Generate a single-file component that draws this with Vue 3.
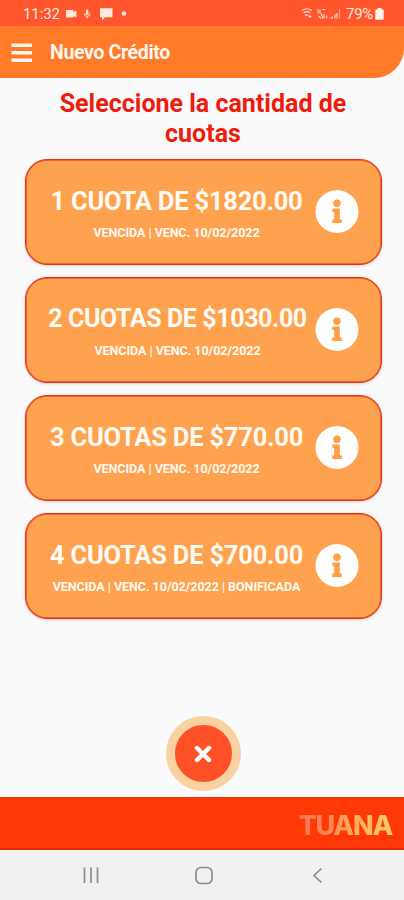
<script setup>
const plans = [
  { title: '1 CUOTA DE $1820.00', note: 'VENCIDA | VENC. 10/02/2022' },
  { title: '2 CUOTAS DE $1030.00', note: 'VENCIDA | VENC. 10/02/2022', wide: true },
  { title: '3 CUOTAS DE $770.00', note: 'VENCIDA | VENC. 10/02/2022' },
  { title: '4 CUOTAS DE $700.00', note: 'VENCIDA | VENC. 10/02/2022 | BONIFICADA' },
]
</script>

<template>
  <div class="screen">
    <div class="status">
      <span class="clock">11:32</span>
      <svg class="status-left" width="64" height="14" viewBox="0 0 64 14" fill="#ffe9df">
        <path d="M1 3h7.500v2l3-1.500v7l-3-1.500v1.500H1z" />
        <rect x="20.800" y="2.500" width="2.600" height="5.500" rx="1.300" />
        <path d="M19.300 6.500q.3 3 2.800 3t2.800-3M22.100 9v2.500" fill="none" stroke="#ffe9df" stroke-width="1" />
        <path d="M35 1.300h12.500v9H40l-3 3v-3h-2z" />
        <circle cx="59" cy="6.500" r="2.300" />
      </svg>
      <span class="fill"></span>
      <svg class="status-right" width="42" height="14" viewBox="0 0 42 14" fill="none" stroke="#ffd9cb" stroke-width="1.200">
        <path d="M.8 3.500q5-3.500 10 0M2.500 6q3.300-2.600 6.600 0M4.200 8.500q1.600-1.300 3.200 0" />
        <path d="M7.500 9.500h3M9 8v3" />
        <path d="M17 2.500v4M19 2.500v4M21.500 2.500h3M17.500 9l2.500 2.500M20 6.500l2 5M23 7v4.500M25.500 8.500v3" />
        <path d="M29 11.500h3V9z" fill="#ffd9cb" stroke="none" />
        <path d="M34 11.500V7.500M36 11.500V6" />
        <path d="M38.500 11.500V2" opacity=".5" />
      </svg>
      <span class="battery-text">79%</span>
      <svg class="battery" width="9" height="12" viewBox="0 0 9 12" fill="#fff4ee">
        <path d="M2.500 0h4v1.500H8a.7.7 0 0 1 .7.7v8.800a.7.7 0 0 1-.7.7H1a.7.7 0 0 1-.7-.7V2.200a.7.7 0 0 1 .7-.7h1.500z" />
      </svg>
    </div>
    <header class="header">
      <svg width="22" height="20" viewBox="0 0 22 20" fill="#fff6ec">
        <rect x=".5" y="0.500" width="20.500" height="3.500" rx=".8" />
        <rect x=".5" y="8" width="20.500" height="3.500" rx=".8" />
        <rect x=".5" y="15.500" width="20.500" height="3.500" rx=".8" />
      </svg>
      <span class="header-title">Nuevo Crédito</span>
    </header>

    <main class="content">
      <h1 class="heading"><span>Seleccione la cantidad de</span> <span>cuotas</span></h1>
      <div class="cards">
        <section v-for="plan in plans" :key="plan.title" class="card">
          <div class="card-text" :class="{ wide: plan.wide }">
            <div class="card-title">{{ plan.title }}</div>
            <div class="card-note">{{ plan.note }}</div>
          </div>
          <svg class="info" width="44" height="44" viewBox="0 0 44 44">
            <circle cx="22" cy="21.500" r="21.500" fill="#fff" />
            <g fill="#ff9f45">
              <circle cx="22" cy="13.300" r="3.700" />
              <path d="M17.300 18.500h7.500v11h2v3.500h-9.600v-3.500h2V22h-1.900z" />
            </g>
          </svg>
        </section>
      </div>
      <button class="close" aria-label="Cerrar">
        <svg width="18" height="18" viewBox="0 0 18 18" fill="none" stroke="#fff" stroke-width="4.400" stroke-linecap="round">
          <path d="M3 3l12 12M15 3L3 15" />
        </svg>
      </button>
    </main>

    <footer class="brand"><span class="logo">TUANA</span></footer>
    <nav class="nav">
      <svg width="404" height="50" viewBox="0 0 404 50" fill="none" stroke="#8c8c8c" stroke-width="1.700">
        <path d="M84.500 17.500v15.500M91 17.500v15.500M97.500 17.500v15.500" />
        <rect x="196" y="17.500" width="16" height="16" rx="5" />
        <path d="M321.500 18.500l-7.500 7 7.500 7" />
      </svg>
    </nav>
  </div>
</template>

<style>
body {
  margin: 0;
  background: #fafafa;
}
</style>

<style scoped>
.screen {
  width: 404px;
  height: 900px;
  display: flex;
  flex-direction: column;
  overflow: hidden;
  background: #fafafa;
  font-family: Roboto, "Liberation Sans", sans-serif;
}
.status {
  height: 26px;
  flex: none;
  box-sizing: border-box;
  padding: 1px 20px 0 23px;
  display: flex;
  align-items: center;
  background: #ff562d;
  color: #ffe9df;
}
.clock {
  width: 42px;
  font-size: 15px;
  letter-spacing: -0.1px;
}
.fill {
  flex: 1;
}
.status-right {
  margin-right: 3px;
}
.battery-text {
  width: 28px;
  font-size: 15px;
  letter-spacing: -0.3px;
  white-space: nowrap;
}
.battery {
  margin-left: 1px;
}
.header {
  height: 52px;
  flex: none;
  box-sizing: border-box;
  padding: 1px 0 0 11px;
  display: flex;
  align-items: center;
  gap: 17px;
  background: #ff7a29;
  border-bottom-right-radius: 30px;
  color: #fff6ec;
}
.header-title {
  font-size: 19.500px;
  font-weight: 700;
  letter-spacing: -0.35px;
}
.content {
  flex: 1;
  display: flex;
  flex-direction: column;
  align-items: center;
  background: #fafafa;
}
.heading {
  margin: 11px 0 0;
  padding-left: 2px;
  box-sizing: border-box;
  width: 404px;
  display: flex;
  flex-direction: column;
  align-items: center;
  font-size: 25px;
  line-height: 30px;
  font-weight: 700;
  color: #ee1c0c;
}
.cards {
  width: 357px;
  margin: 10px 0 0 2px;
  display: flex;
  flex-direction: column;
  gap: 12px;
}
.card {
  height: 106px;
  box-sizing: border-box;
  border: 1px solid #e93012;
  border-radius: 22px;
  padding-left: 20px;
  display: flex;
  align-items: center;
  background: #ffa24f;
  color: #fffaf2;
  box-shadow: inset 0 0 0 0.700px #ee4a20, 0 1px 3px rgba(0, 0, 0, 0.16);
}
.card-text {
  width: 262px;
  margin-right: 7px;
  padding-top: 2px;
  text-align: center;
  white-space: nowrap;
}
.card-title {
  font-size: 25.500px;
  line-height: 30px;
  font-weight: 700;
  letter-spacing: -0.22px;
}
.wide {
  padding-left: 2px;
  box-sizing: border-box;
}
.wide .card-title {
  font-size: 25px;
  letter-spacing: -0.400px;
}
.card-note {
  margin-top: 9px;
  font-size: 12.500px;
  line-height: 16px;
  font-weight: 700;
  letter-spacing: -0.04px;
}
.close {
  margin: 97px 0 0 2px;
  padding: 0;
  width: 75px;
  height: 75px;
  flex: none;
  display: flex;
  align-items: center;
  justify-content: center;
  border: 9px solid #fad2a2;
  border-radius: 50%;
  background: #ff5127;
}
.brand {
  height: 53px;
  flex: none;
  box-sizing: border-box;
  padding: 5px 11px 0 0;
  border-top: 1px solid #ee3015;
  border-bottom: 2px solid #e32605;
  display: flex;
  align-items: center;
  justify-content: flex-end;
  background: #ff3905;
}
.logo {
  font-family: Inter, sans-serif;
  font-size: 27px;
  line-height: 32px;
  font-weight: 800;
  letter-spacing: -1.200px;
  padding-right: 1px;
  background: linear-gradient(90deg, #ff7552 0%, #ff8a57 35%, #ffae5a 60%, #ffd166 100%);
  background-clip: text;
  color: transparent;
}
.nav {
  height: 50px;
  flex: none;
  background: #f1f1f1;
}
</style>
